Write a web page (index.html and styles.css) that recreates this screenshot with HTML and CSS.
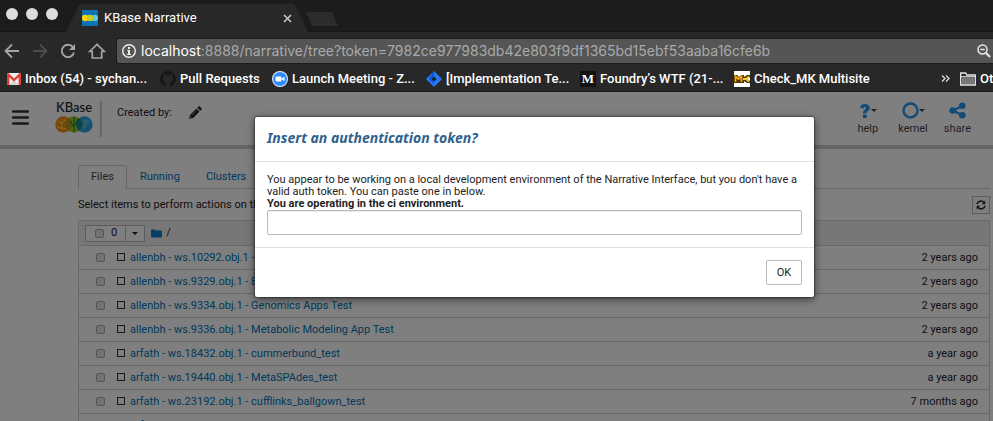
FILE: index.html
```html
<!DOCTYPE html>
<html lang="en">
<head>
<meta charset="utf-8">
<title>KBase Narrative</title>
<link rel="stylesheet" href="styles.css">
</head>
<body>
<header class="browser">
  <div class="tabstrip">
    <div class="lights"><i></i><i></i><i></i></div>
    <div class="tab">
      <svg class="favicon" width="16" height="16" viewBox="0 0 16 16"><path fill="#0b72b5" d="M0 0h16v16H0z"/><circle cx="3.200" cy="8" r="3.200" fill="#ffd400"/><circle cx="12.800" cy="8" r="3.200" fill="#62c8d3"/><circle cx="8" cy="8" r="3.200" fill="#c3cf21"/></svg>
      <span class="tab-title">KBase Narrative</span>
      <button class="plain" aria-label="Close tab"><svg width="9" height="9" viewBox="0 0 9 9"><path d="M1 1l7 7M8 1L1 8" stroke="#c8c8c8" stroke-width="1.5"/></svg></button>
    </div>
    <button class="newtab" aria-label="New tab"></button>
  </div>
  <div class="toolbar">
    <button class="plain" aria-label="Back"><svg width="16" height="16" viewBox="0 0 16 16" fill="none" stroke="#a4a4a4" stroke-width="1.8"><path d="M15 8H2M8 1.500L1.500 8 8 14.500"/></svg></button>
    <button class="plain" aria-label="Forward"><svg width="16" height="16" viewBox="0 0 16 16" fill="none" stroke="#4d4d4d" stroke-width="1.8"><path d="M1 8h13M8 1.500L14.500 8 8 14.500"/></svg></button>
    <button class="plain" aria-label="Reload"><svg width="16" height="16" viewBox="0 0 16 16"><path d="M13 4.200A6.200 6.200 0 1 0 14 9.500" fill="none" stroke="#a4a4a4" stroke-width="1.900"/><path d="M15 1v6H9z" fill="#a4a4a4"/></svg></button>
    <button class="plain" aria-label="Home"><svg width="18" height="16" viewBox="0 0 18 16"><path d="M9 1.300L1.800 8.500H4.300V15h9.400V8.500h2.500z" fill="none" stroke="#a4a4a4" stroke-width="1.700"/></svg></button>
    <div class="address">
      <svg width="16" height="16" viewBox="0 0 16 16"><circle cx="8" cy="8" r="6.300" fill="none" stroke="#f0f0f0" stroke-width="1.400"/><path d="M7 4h2v2H7zM6.300 7H9v4h1v1H6v-1h1V8h-.7z" fill="#f0f0f0"/></svg>
      <span class="url"><b>localhost</b>:8888/narrative/tree?token=7982ce977983db42e803f9df1365bd15ebf53aaba16cfe6b</span>
      <svg width="14" height="14" viewBox="0 0 14 14" fill="none" stroke="#e8e8e8" stroke-width="1.500"><circle cx="5.500" cy="5.500" r="4.500"/><path d="M3.300 5.500h4.400"/><path d="M8.800 8.800L13 13" stroke-width="2"/></svg>
    </div>
  </div>
  <nav class="bookmarks">
    <a href="#" class="bm bm-1"><svg width="14" height="12" viewBox="0 0 14 12"><path fill="#f1eeee" d="M0 0h14v12H0z"/><path d="M3 12l4-5 4 5" fill="#d8d4d4"/><path d="M1.200 12V1.500L7 7l5.800-5.500V12" fill="none" stroke="#db4437" stroke-width="2.400"/></svg>Inbox (54) - sychan...</a>
    <a href="#" class="bm bm-2"><svg width="16" height="16" viewBox="0 0 16 16"><path fill="#161616" d="M8 0a8 8 0 0 0-2.500 15.600c.4.100.5-.2.500-.4v-1.500c-2.200.5-2.700-.9-2.700-.9-.4-.9-.9-1.200-.9-1.200-.7-.5.100-.5.100-.5.800.100 1.200.8 1.200.8.700 1.200 1.900.9 2.300.7.100-.5.300-.9.500-1.100-1.800-.2-3.600-.9-3.600-4 0-.9.300-1.600.8-2.100-.1-.2-.4-1 .1-2.100 0 0 .7-.2 2.200.8a7.500 7.500 0 0 1 4 0c1.500-1 2.200-.8 2.200-.8.400 1.100.2 1.900.1 2.100.5.600.8 1.300.8 2.100 0 3.100-1.900 3.700-3.700 3.900.3.300.6.800.6 1.500v2.200c0 .2.100.5.600.4A8 8 0 0 0 8 0z"/></svg>Pull Requests</a>
    <a href="#" class="bm bm-3"><svg width="16" height="16" viewBox="0 0 16 16"><circle cx="8" cy="8" r="8" fill="#e9f1fb"/><circle cx="8" cy="8" r="7" fill="#2d8cff"/><rect x="3.500" y="5.500" width="6" height="5" rx="1" fill="#fff"/><path d="M10 7.500l2.500-1.800v4.600L10 8.500z" fill="#fff"/></svg>Launch Meeting - Z...</a>
    <a href="#" class="bm bm-4"><svg width="16" height="16" viewBox="0 0 16 16"><path d="M8 0l8 8-8 8-8-8z" fill="#2478f5"/><path d="M8 0v5L5 8l3 3v2L3 8z" fill="#0d55cf"/><path d="M8 5.500L10.500 8 8 10.500 5.500 8z" fill="#1b1f2a"/></svg>[Implementation Te...</a>
    <a href="#" class="bm bm-5"><span class="medium">M</span>Foundry’s WTF (21-...</a>
    <a href="#" class="bm bm-6"><svg width="16" height="16" viewBox="0 0 16 16"><path fill="#fff" d="M0 0h16v16H0z"/><path d="M0 4h3l2 2 2-2h3v2l3-2h3v2l-3 2 3 2v2h-3l-3-2v2H0z" fill="#4a3500"/><path d="M1.500 11V5.500L4.500 8l3-2.500V11" fill="none" stroke="#f5a800" stroke-width="1.800"/><path d="M9 8h3l3-2.500M12 8l3 2.500" fill="none" stroke="#ffc93c" stroke-width="1.800"/></svg>Check_MK Multisite</a>
    <button class="plain more" aria-label="More bookmarks"><svg width="9" height="7" viewBox="0 0 9 7"><path d="M1 .5l3 3-3 3M5 .5l3 3-3 3" fill="none" stroke="#ddd" stroke-width="1.300"/></svg></button>
    <a href="#" class="bm"><svg width="16" height="14" viewBox="0 0 16 14"><path d="M.7 13V1h5l1 2h8.600v10z" fill="#2a2a2a" stroke="#e8e8e8" stroke-width="1.300"/><path d="M2 5.500h12V12H2z" fill="#777"/><path d="M1 4.700h14" stroke="#e8e8e8"/></svg>Other Bookmarks</a>
  </nav>
</header>

<main class="page">
  <div class="appbar">
    <button class="plain" aria-label="Menu"><svg width="17" height="15" viewBox="0 0 17 15"><path d="M1 1.500h15M1 7.500h15M1 13.500h15" stroke="#333" stroke-width="2.500" stroke-linecap="round"/></svg></button>
    <div class="logo">
      <span>KBase</span>
      <svg width="38" height="17" viewBox="0 0 38 17"><circle cx="8.500" cy="8.500" r="8.200" fill="#f68b1f"/><circle cx="29.500" cy="8.500" r="8.200" fill="#2aa5dc"/><circle cx="19" cy="8.500" r="8.200" fill="#a5cc2c"/><path d="M14 2a8.200 8.200 0 0 1 0 13 8.200 8.200 0 0 1 0-13z" fill="#b19a16"/><path d="M24.200 2a8.200 8.200 0 0 1 0 13 8.200 8.200 0 0 1 0-13z" fill="#148a8c"/><path d="M3 5l4 2 4-4M7 7l-1 5 5 1M6 12l-4-1" fill="none" stroke="#ffd51e" stroke-width="1.300"/><path d="M19 16V8M19 11l-4-6M19 10l4-7M19 7V1" stroke="#2f7d2b" stroke-width="1.200" fill="none"/><path d="M28 4l5-1 2 4-3 1-1 4-3 1-1-3 2-2z" fill="#59bfd4"/></svg>
    </div>
    <div class="created">Created by:
      <svg width="14" height="14" viewBox="0 0 14 14"><path d="M1 13l1-4 6.500-6.500 3 3L5 12zM9.300 1.700L10.500.5q.6-.6 1.200 0l1.800 1.800q.6.600 0 1.200L12.300 4.700z" fill="#222"/><path d="M3.500 9.500L8.500 4.500" stroke="#aaa" stroke-width=".7"/><path d="M2 11l1 1" stroke="#eee"/></svg>
    </div>
    <div class="actions">
      <button class="act"><span class="ic"><svg width="12" height="17" viewBox="0 0 12 17"><path d="M1 5.600C1.800 3 3.500 2 6 2c2.800 0 4.800 1.600 4.800 3.900C10.800 9 7.600 8.500 7.600 11.200H4.100C4 8 6.900 7.800 6.900 6 6.900 4.600 4.900 4.500 4 6.600zM4 12.500h3.600V16H4z" fill="#2196f3"/></svg><i class="caret"></i></span>help</button>
      <button class="act"><span class="ic"><svg width="17" height="17" viewBox="0 0 17 17"><circle cx="8.500" cy="8.500" r="7" fill="none" stroke="#2196f3" stroke-width="2.400"/></svg><i class="caret"></i></span>kernel</button>
      <button class="act"><span class="ic"><svg width="17" height="17" viewBox="0 0 17 17" fill="#2196f3"><path d="M4 8.500L13 4M4 8.500l9 4.500" stroke="#2196f3" stroke-width="2.200"/><circle cx="3.700" cy="8.500" r="3.300"/><circle cx="13.300" cy="3.700" r="3.300"/><circle cx="13.300" cy="13.300" r="3.300"/></svg></span>share</button>
    </div>
  </div>

  <div class="content">
    <nav class="tabs">
      <a href="#" class="active">Files</a><a href="#">Running</a><a href="#">Clusters</a>
    </nav>
    <div class="hint">
      <span>Select items to perform actions on them.</span>
      <button class="refresh" aria-label="Refresh"><svg width="10" height="10" viewBox="0 0 10 10"><path d="M1 4.200A4 4 0 0 1 8 2.500M9 5.800A4 4 0 0 1 2 7.500" fill="none" stroke="#222" stroke-width="1.500"/><path d="M9.300.6v3.600H5.700zM.7 9.400V5.800h3.600z" fill="#222"/></svg></button>
    </div>
    <div class="list">
      <div class="list-head">
        <div class="group">
          <label><input type="checkbox"><span>0</span></label>
          <button aria-label="Select type"><i class="caret"></i></button>
        </div>
        <svg width="11" height="9" viewBox="0 0 11 9"><path d="M0 1.500Q0 .5 1 .5h2.500q1 0 1 1H10q1 0 1 1V7.500q0 1-1 1H1q-1 0-1-1z" fill="#0b7fc7"/></svg>
        <span class="slash">/</span>
      </div>
      <table>
        <tr><td><div class="item"><input type="checkbox" aria-label="Select"><i class="nb"></i><a href="#">allenbh - ws.10292.obj.1 - Narrative</a></div></td><td>2 years ago</td></tr>
        <tr><td><div class="item"><input type="checkbox" aria-label="Select"><i class="nb"></i><a href="#">allenbh - ws.9329.obj.1 - Example</a></div></td><td>2 years ago</td></tr>
        <tr><td><div class="item"><input type="checkbox" aria-label="Select"><i class="nb"></i><a href="#">allenbh - ws.9334.obj.1 - Genomics Apps Test</a></div></td><td>2 years ago</td></tr>
        <tr><td><div class="item"><input type="checkbox" aria-label="Select"><i class="nb"></i><a href="#">allenbh - ws.9336.obj.1 - Metabolic Modeling App Test</a></div></td><td>2 years ago</td></tr>
        <tr><td><div class="item"><input type="checkbox" aria-label="Select"><i class="nb"></i><a href="#">arfath - ws.18432.obj.1 - cummerbund_test</a></div></td><td>a year ago</td></tr>
        <tr><td><div class="item"><input type="checkbox" aria-label="Select"><i class="nb"></i><a href="#">arfath - ws.19440.obj.1 - MetaSPAdes_test</a></div></td><td>a year ago</td></tr>
        <tr><td><div class="item"><input type="checkbox" aria-label="Select"><i class="nb"></i><a href="#">arfath - ws.23192.obj.1 - cufflinks_ballgown_test</a></div></td><td>7 months ago</td></tr>
        <tr><td><div class="item"><input type="checkbox" aria-label="Select"><i class="nb"></i><a href="#">arfath - ws.23193.obj.1 - test</a></div></td><td>7 months ago</td></tr>
      </table>
    </div>
  </div>

  <div class="backdrop">
    <form class="dialog" role="dialog" aria-labelledby="dlg-title">
      <h4 id="dlg-title">Insert an authentication token?</h4>
      <div class="dialog-body">
        <label for="token">You appear to be working on a local development environment of the Narrative Interface, but you don't have a valid auth token. You can paste one in below.<br><b>You are operating in the ci environment.</b></label>
        <input id="token" type="text">
      </div>
      <div class="dialog-foot"><button type="button">OK</button></div>
    </form>
  </div>
</main>
</body>
</html>
```
FILE: styles.css
```css
* { box-sizing: border-box; }
body {
  margin: 0;
  height: 100vh;
  display: flex;
  flex-direction: column;
  overflow: hidden;
  font: 11px/12px Roboto, "Noto Sans", sans-serif;
  color: #222;
  background: #fff;
}
a { text-decoration: none; color: #0073b7; }
button { font: inherit; color: inherit; cursor: pointer; }
svg { display: block; flex: none; }
.plain { padding: 0; border: 0; background: none; }

.browser { background: #282828; color: #fff; font-family: Roboto, sans-serif; border-bottom: 1px solid #1c1c1c; }
.tabstrip { display: flex; height: 32px; background: #1c1c1c; border-bottom: 1px solid #161616; }
.lights { display: flex; gap: 8px; padding: 8px 0 0 6px; width: 66px; }
.lights i { width: 12px; height: 12px; border-radius: 50%; background: #dcdcdc; }
.tab {
  display: flex;
  align-items: center;
  width: 242px;
  height: 28px;
  margin-top: 4px;
  padding: 0 16px;
  background: #282828;
  clip-path: polygon(0 100%, 12px 3px, 15px 0, 227px 0, 230px 3px, 100% 100%);
}
.tab-title { flex: 1; margin-left: 6px; font-size: 13px; line-height: 16px; }
.newtab { width: 32px; height: 14px; margin: 12px 0 0 -2px; border: 0; background: #2c2c2c; clip-path: polygon(0 0, 26px 0, 100% 100%, 6px 100%); }
.toolbar { display: flex; align-items: center; gap: 12px; height: 34px; padding: 3px 0 0 4px; }
.address { flex: 1; display: flex; align-items: center; height: 26px; margin-left: -2px; padding: 0 2px 0 4px; border: 1px solid #1c1c1c; border-right: 0; border-radius: 3px 0 0 3px; background: #555; }
.url { flex: 1; margin-left: 4px; font: 14px/18px Inter, sans-serif; color: #a9a9a9; white-space: nowrap; }
.url b { font-weight: 400; color: #fff; }
.bookmarks { display: flex; align-items: center; height: 25px; padding-left: 7px; font-size: 13px; line-height: 16px; font-weight: 500; white-space: nowrap; overflow: hidden; }
.bm { display: flex; flex: none; align-items: center; gap: 4px; color: #fff; }
.bm-1 { width: 153px; }
.bm-2 { width: 112px; }
.bm-3 { width: 154px; }
.bm-4 { width: 154px; }
.bm-5 { width: 154px; }
.bm-6 { width: 207px; }
.more { margin-right: 10px; }
.medium { width: 16px; height: 16px; background: #111; font: bold 13px/16px "Liberation Serif", serif; text-align: center; }

.page { position: relative; flex: 1; overflow: hidden; }
.appbar { display: flex; align-items: flex-start; height: 57px; padding: 9px 22px 0 12px; border-bottom: 4px solid #ccc; }
.appbar > .plain { margin-top: 9px; }
.logo { box-sizing: content-box; display: flex; flex-direction: column; align-items: center; gap: 3px; width: 38px; height: 36px; margin-left: 12px; padding: 0 7px 0 14px; border-right: 2px solid #ccc; font: 500 13px/12px Lato, sans-serif; }
.created { display: flex; align-items: center; gap: 16px; margin: 5px 0 0 15px; }
.actions { display: flex; gap: 18px; margin: 0 0 0 auto; }
.act { display: flex; flex-direction: column; align-items: center; gap: 4px; padding: 1px 0 0; border: 0; background: none; color: #444; }
.act:nth-child(2) { margin-left: 4px; }
.ic { display: flex; align-items: center; }
.caret { border: 3px solid transparent; border-top-color: currentColor; border-bottom: 0; }
.actions { padding-right: 0; gap: 16px; }

.content { padding: 16px 3px 0 78px; }
.tabs { display: flex; height: 24px; border-bottom: 1px solid #ccc; }
.tabs a { padding: 5px 12px; border: 1px solid transparent; border-bottom: 0; }
.tabs .active { height: 24px; border-color: #ccc; border-radius: 2px 2px 0 0; background: #fff; color: #444; }
.hint { display: flex; justify-content: space-between; align-items: center; height: 31px; }
.refresh { display: flex; align-items: center; justify-content: center; width: 18px; height: 18px; padding: 0; border: 1px solid #bbb; background: #fff; }
.list { border: 1px solid #d0d0d0; border-radius: 2px; }
.list-head { display: flex; align-items: center; height: 24px; padding-left: 6px; background: #eee; }
.group { display: flex; height: 17px; margin-right: 6px; border: 1px solid #bbb; background: #fff; }
.group label { display: flex; align-items: center; gap: 7px; padding: 0 8px 0 9px; }
.group button { display: flex; align-items: center; padding: 0 6px; border: 0; border-left: 1px solid #bbb; background: #fff; }
.slash { margin-left: 4px; }
input[type="checkbox"] { appearance: none; flex: none; width: 9px; height: 9px; margin: 0; border: 1px solid #aaa; border-radius: 2px; background: #e2e2e2; }
table { width: 100%; border-collapse: collapse; }
td { height: 24px; padding: 0 11px; border-top: 1px solid #d0d0d0; text-align: right; white-space: nowrap; }
td:first-child { padding-left: 17px; }
.item { display: flex; align-items: center; }
.nb { width: 8px; height: 8px; margin: 0 5px 2px 12px; border: 1px solid #333; }

.backdrop { position: absolute; inset: 0; padding: 25px 179px 0 255px; background: rgba(0, 0, 0, .5); }
.dialog { background: #fff; border-radius: 2px; box-shadow: 0 2px 8px rgba(0, 0, 0, .6), 0 0 2px #000; }
.dialog h4 { margin: 0; padding: 12px; height: 45px; border-bottom: 1px solid #e0e0e0; font: italic bold 14px/18px "Noto Sans", sans-serif; color: #2e618d; }
.dialog-body { padding: 12px; }
.dialog-body label { display: block; }
.dialog-body input { display: block; width: 100%; height: 25px; border: 1px solid #bbb; border-radius: 2px; box-shadow: inset 0 1px 1px rgba(0, 0, 0, .08); }
.dialog-foot { display: flex; justify-content: flex-end; padding: 12px; border-top: 1px solid #e0e0e0; }
.dialog-foot button { width: 36px; height: 25px; padding: 0; border: 1px solid #bbb; border-radius: 2px; background: #fff; }
```
